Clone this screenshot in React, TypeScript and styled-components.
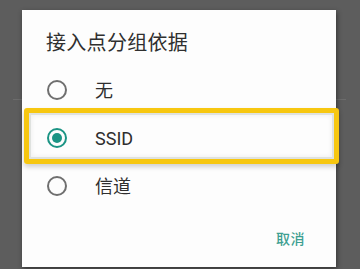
import React, { useState } from "react";
import styled, { createGlobalStyle } from "styled-components";

const Global = createGlobalStyle`
  html, body { margin: 0; padding: 0; }
  body {
    width: 360px;
    height: 269px;
    overflow: hidden;
    background: #5d5d5d;
    font-family: Roboto, "Noto Sans CJK SC", sans-serif;
  }
`;

const Screen = styled.div`
  position: relative;
  width: 360px;
  height: 269px;
  background: #5d5d5d;
  overflow: hidden;
`;

const BackDivider = styled.div`
  margin: 99px 14px 0 13px;
  height: 1px;
  background: #6c6c6c;
`;

const Dialog = styled.div`
  position: absolute;
  left: 22px;
  top: 10px;
  width: 314px;
  height: 257px;
  background: #fdfdfd;
  box-shadow: 1px 2px 5px rgba(0, 0, 0, 0.45);
  display: flex;
  flex-direction: column;
`;

const Title = styled.div`
  padding: 20px 24px 0 24px;
  height: 36px;
  font-size: 20px;
  line-height: 26px;
  color: #2f2f2f;
  letter-spacing: 0.3px;
`;

const List = styled.div`
  display: flex;
  flex-direction: column;
`;

const Row = styled.div`
  position: relative;
  height: 48px;
  display: flex;
  align-items: center;
  padding-left: 25px;
  gap: 28px;
  cursor: pointer;
`;

const Radio = styled.span<{ $checked: boolean }>`
  box-sizing: border-box;
  width: 20px;
  height: 20px;
  border-radius: 50%;
  border: 2px solid ${(p) => (p.$checked ? "#1b9484" : "#6f6f6f")};
  display: flex;
  align-items: center;
  justify-content: center;
  flex: none;
  &::after {
    content: "";
    display: ${(p) => (p.$checked ? "block" : "none")};
    width: 10px;
    height: 10px;
    border-radius: 50%;
    background: #1b9484;
  }
`;

const Label = styled.span`
  font-size: 18px;
  line-height: 22px;
  color: #2e2e2e;
  position: relative;
  top: 1px;
`;

const Focus = styled.div`
  position: absolute;
  left: 2px;
  right: -3px;
  top: -6px;
  bottom: -2px;
  border: 5px solid #f7c710;
  border-radius: 3px;
  box-shadow: 0 3px 5px rgba(0, 0, 0, 0.18), inset 0 0 0 2px #dfe2df,
    inset 0 0 4px 3px rgba(0, 0, 0, 0.05);
  pointer-events: none;
`;

const Actions = styled.div`
  flex: 1;
  display: flex;
  justify-content: flex-end;
  align-items: flex-end;
  padding: 0 31px 19px 0;
`;

const TextButton = styled.button`
  border: none;
  background: none;
  padding: 0;
  font-family: Roboto, "Noto Sans CJK SC", sans-serif;
  font-size: 14px;
  line-height: 18px;
  font-weight: 500;
  color: #3d9f91;
  letter-spacing: 0.5px;
`;

const options = ["无", "SSID", "信道"];

export default function App() {
  const [sel, setSel] = useState(1);
  return (
    <Screen>
      <Global />
      <BackDivider />
      <Dialog>
        <Title>接入点分组依据</Title>
        <List>
          {options.map((o, i) => (
            <Row key={o} onClick={() => setSel(i)}>
              <Radio $checked={sel === i} />
              <Label>{o}</Label>
              {i === 1 && <Focus />}
            </Row>
          ))}
        </List>
        <Actions>
          <TextButton>取消</TextButton>
        </Actions>
      </Dialog>
    </Screen>
  );
}
